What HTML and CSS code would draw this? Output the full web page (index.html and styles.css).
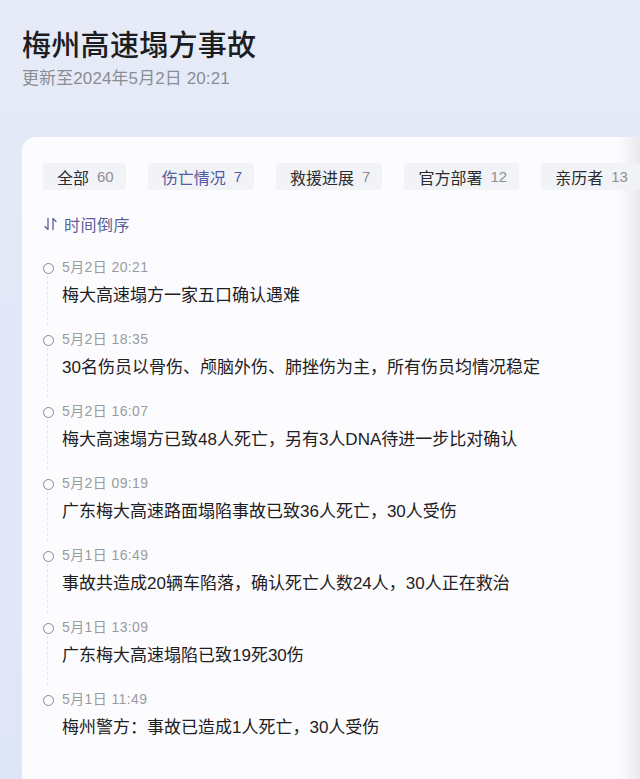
FILE: index.html
```html
<!DOCTYPE html>
<html lang="zh-CN">
<head>
<meta charset="utf-8">
<title>梅州高速塌方事故</title>
<link rel="stylesheet" href="styles.css">
</head>
<body>
<header class="header">
  <h1 class="title">梅州高速塌方事故</h1>
  <p class="updated">更新至2024年5月2日 20:21</p>
</header>
<main class="card">
  <nav class="tabs">
    <span class="tab"><span class="tab-label">全部</span><span class="tab-count">60</span></span>
    <span class="tab tab-active"><span class="tab-label">伤亡情况</span><span class="tab-count">7</span></span>
    <span class="tab"><span class="tab-label">救援进展</span><span class="tab-count">7</span></span>
    <span class="tab"><span class="tab-label">官方部署</span><span class="tab-count">12</span></span>
    <span class="tab"><span class="tab-label">亲历者</span><span class="tab-count">13</span></span>
  </nav>
  <div class="sort">
    <svg class="sort-icon" width="13" height="14" viewBox="0 0 13 14" aria-hidden="true">
      <path d="M4 1.5 V12.5 L1 9.5" fill="none" stroke="#5b5f9c" stroke-width="1.3" stroke-linecap="round" stroke-linejoin="round"/>
      <path d="M9 12.5 V1.5 L12 4.5" fill="none" stroke="#5b5f9c" stroke-width="1.3" stroke-linecap="round" stroke-linejoin="round"/>
    </svg>
    <span>时间倒序</span>
  </div>
  <ul class="timeline">
    <li class="item"><div class="time">5月2日 20:21</div><div class="text">梅大高速塌方一家五口确认遇难</div></li>
    <li class="item"><div class="time">5月2日 18:35</div><div class="text">30名伤员以骨伤、颅脑外伤、肺挫伤为主，所有伤员均情况稳定</div></li>
    <li class="item"><div class="time">5月2日 16:07</div><div class="text">梅大高速塌方已致48人死亡，另有3人DNA待进一步比对确认</div></li>
    <li class="item"><div class="time">5月2日 09:19</div><div class="text">广东梅大高速路面塌陷事故已致36人死亡，30人受伤</div></li>
    <li class="item"><div class="time">5月1日 16:49</div><div class="text">事故共造成20辆车陷落，确认死亡人数24人，30人正在救治</div></li>
    <li class="item"><div class="time">5月1日 13:09</div><div class="text">广东梅大高速塌陷已致19死30伤</div></li>
    <li class="item item-last"><div class="time">5月1日 11:49</div><div class="text">梅州警方：事故已造成1人死亡，30人受伤</div></li>
  </ul>
</main>
</body>
</html>
```

FILE: styles.css
```css
* { box-sizing: border-box; }

html, body {
  height: 100%;
}

body {
  margin: 0;
  overflow: hidden;
  display: flex;
  flex-direction: column;
  font-family: "Liberation Sans", "Noto Sans CJK SC", sans-serif;
  background: linear-gradient(180deg, #e7ebf8 0%, #e2e8f7 40%, #dfe6f6 100%);
  color: #222;
}

.header {
  padding: 25px 0 0 22px;
}

.title {
  margin: 0;
  font-family: "Noto Sans CJK SC", sans-serif;
  font-size: 29px;
  line-height: 36px;
  font-weight: 500;
  color: #1c1d21;
  letter-spacing: 0.3px;
}

.updated {
  margin: 6px 0 0;
  font-size: 17px;
  line-height: 24px;
  color: #8b8d94;
  letter-spacing: 0.1px;
}

.card {
  flex: 1;
  margin: 46px 0 0 22px;
  padding: 26px 0 0 21px;
  border-top-left-radius: 14px;
  background: linear-gradient(90deg, #fcfcfe 0, #fcfcfe calc(100% - 22px), #eaeaee 100%);
}

.tabs {
  display: flex;
  gap: 22px;
  white-space: nowrap;
}

.tab {
  display: flex;
  align-items: center;
  height: 27px;
  padding: 0 12px 0 14px;
  background: #f2f3f6;
  border-radius: 3px;
  font-size: 16px;
  flex-shrink: 0;
}

.tab-label {
  color: #2a2b2f;
}

.tab-count {
  margin-left: 8px;
  font-size: 15px;
  color: #8d8e93;
}

.tab-active .tab-label,
.tab-active .tab-count {
  color: #535aa6;
}

.sort {
  display: flex;
  align-items: center;
  gap: 7px;
  margin-top: 22px;
  height: 24px;
  font-size: 16px;
  color: #5b5f9c;
  letter-spacing: 0.5px;
}

.sort-icon {
  display: block;
  margin-left: 1px;
}

.timeline {
  list-style: none;
  margin: 21px 0 0;
  padding: 0;
}

.item {
  position: relative;
  padding: 0 0 19px 19px;
}

.item::before {
  content: "";
  position: absolute;
  left: 0;
  top: 6px;
  width: 9px;
  height: 9px;
  border: 1.5px solid #8a8b90;
  border-radius: 50%;
  background: #fcfcfe;
}

.item::after {
  content: "";
  position: absolute;
  left: 4px;
  top: 19px;
  bottom: 4px;
  border-left: 1px dashed #e6e7ec;
}

.item-last::after {
  display: none;
}

.time {
  height: 20px;
  line-height: 20px;
  font-size: 14px;
  color: #9a9ba0;
  letter-spacing: 0.4px;
}

.text {
  margin-top: 5px;
  line-height: 28px;
  font-size: 17px;
  color: #1f2024;
}
```
